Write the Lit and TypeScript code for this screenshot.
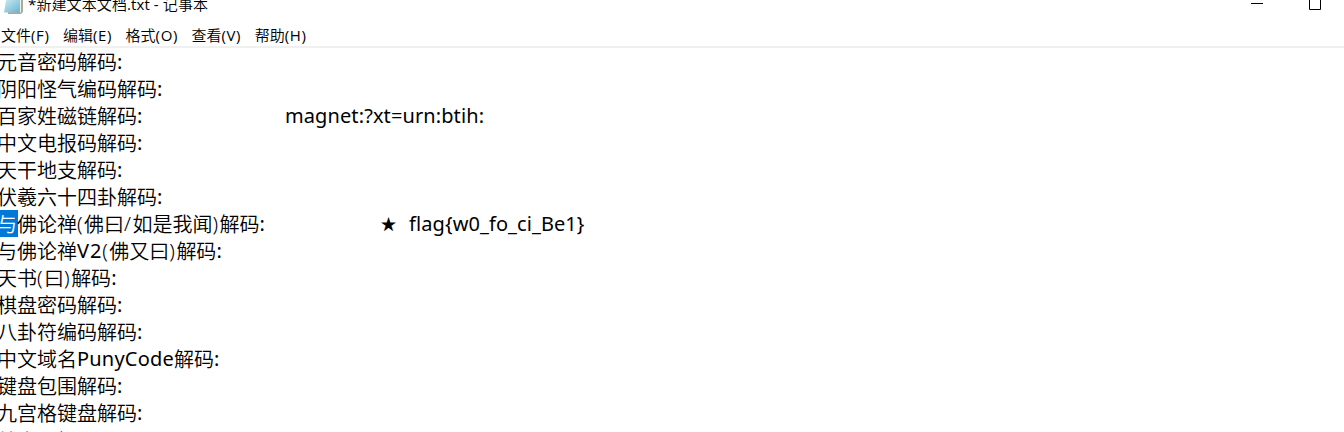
import { LitElement, html, css } from "lit";
import { customElement } from "lit/decorators.js";

interface Run { t: string; k: string; }
const cjk = (t: string): Run => ({ t, k: "cjk" });
const lat = (t: string, k = ""): Run => ({ t, k: "lat " + k });
const mark = (t: string): Run => ({ t, k: "lat mark" });

const LINES: Run[][] = [
  [cjk("元音密码解码"), lat(":")],
  [cjk("阴阳怪气编码解码"), lat(":")],
  [cjk("百家姓磁链解码"), lat(":", "tab-magnet"), lat("magnet:?xt=urn:btih:", "magnet")],
  [cjk("中文电报码解码"), lat(":")],
  [cjk("天干地支解码"), lat(":")],
  [cjk("伏羲六十四卦解码"), lat(":")],
  [{ t: "与", k: "cjk sel" }, cjk("佛论禅"), mark("("), cjk("佛曰"), mark("/"), cjk("如是我闻"), mark(")"), cjk("解码"), lat(":", "tab-flag"), { t: "★", k: "cjk star" }, lat("flag{w0_fo_ci_Be1}", "flag")],
  [cjk("与佛论禅"), lat("V2", "v2"), mark("("), cjk("佛又曰"), mark(")"), cjk("解码"), lat(":")],
  [cjk("天书"), mark("("), cjk("曰"), mark(")"), cjk("解码"), lat(":")],
  [cjk("棋盘密码解码"), lat(":")],
  [cjk("八卦符编码解码"), lat(":")],
  [cjk("中文域名"), lat("PunyCode", "puny"), cjk("解码"), lat(":")],
  [cjk("键盘包围解码"), lat(":")],
  [cjk("九宫格键盘解码"), lat(":")],
  [cjk("敲击码解码"), lat(":")],
];

const MENUS = [["文件", "F"], ["编辑", "E"], ["格式", "O"], ["查看", "V"], ["帮助", "H"]];

@customElement("app-root")
export class AppRoot extends LitElement {
  static styles = css`
    :host { display: flex; flex-direction: column; width: 1344px; height: 432px; overflow: hidden; background: #fff; color: #000; font-family: "Noto Sans", "Noto Sans CJK SC", sans-serif; }
    .title { height: 25px; flex: none; display: flex; overflow: hidden; }
    .icon { flex: none; display: block; width: 28px; height: 14px; }
    .name, .menu { white-space: pre; font-family: "Open Sans", "Noto Sans CJK SC", sans-serif; font-weight: 350; font-size: 15px; }
    .name { height: 20px; line-height: 20px; margin-top: -6px; flex: 1; letter-spacing: 0.1px; }
    .reg { font-weight: 400; }
    .controls { flex: none; width: 93px; height: 12px; }
    .menu { height: 21px; flex: none; display: flex; gap: 13.5px; padding-left: 1px; line-height: 20px; }
    .menu .reg { letter-spacing: 0.62px; }
    .rule { height: 2px; flex: none; background: #f0f0f0; }
    .editor { flex: 1; overflow: hidden; }
    .line { height: 27px; display: flex; margin-left: -3px; line-height: 27px; font-size: 20px; white-space: pre; }
    .line:last-child { margin-top: 1px; }
    .cjk { font-family: "Noto Sans CJK SC", sans-serif; font-weight: 350; }
    .lat { font-family: "Noto Sans", sans-serif; }
    .mark { font-weight: 350; letter-spacing: 1.5px; }
    .sel { background: #0078d7; color: #fff; margin-right: -0.5px; padding-right: 0.5px; }
    .magnet { letter-spacing: 0.1px; }
    .v2 { letter-spacing: 0.9px; }
    .puny { letter-spacing: 0.2px; }
    .tab-magnet { width: 148px; }
    .tab-flag { width: 121px; }
    .star { width: 28.5px; font-size: 16px; }
    .flag { letter-spacing: 0.08px; }
  `;

  render() {
    return html`
      <div class="title">
        <svg class="icon" viewBox="0 0 28 14">
          <defs><linearGradient id="g" x1="0" y1="0" x2="1" y2="1"><stop offset="0" stop-color="#c9e9f2"/><stop offset="1" stop-color="#63b3cd"/></linearGradient></defs>
          <path d="M8 0H23V12L21 14H8Z" fill="#b3a892"/>
          <path d="M6 0H21V12.5H4Z" fill="url(#g)"/>
          <path d="M20.5 0V12.5" stroke="#e8f3f5"/>
        </svg>
        <div class="name"><span class="reg">*</span>新建文本文档<span class="reg">.txt - </span>记事本</div>
        <svg class="controls" viewBox="0 0 93 12" fill="none" stroke="#000">
          <path d="M0 3.5H12M58.5 0V9.5H69.5V0"/>
        </svg>
      </div>
      <div class="menu">${MENUS.map(([name, key]) => html`<div>${name}<span class="reg">(${key})</span></div>`)}</div>
      <div class="rule"></div>
      <div class="editor">
        ${LINES.map((l) => html`<div class="line">${l.map((r) => html`<span class=${r.k}>${r.t}</span>`)}</div>`)}
      </div>`;
  }
}
